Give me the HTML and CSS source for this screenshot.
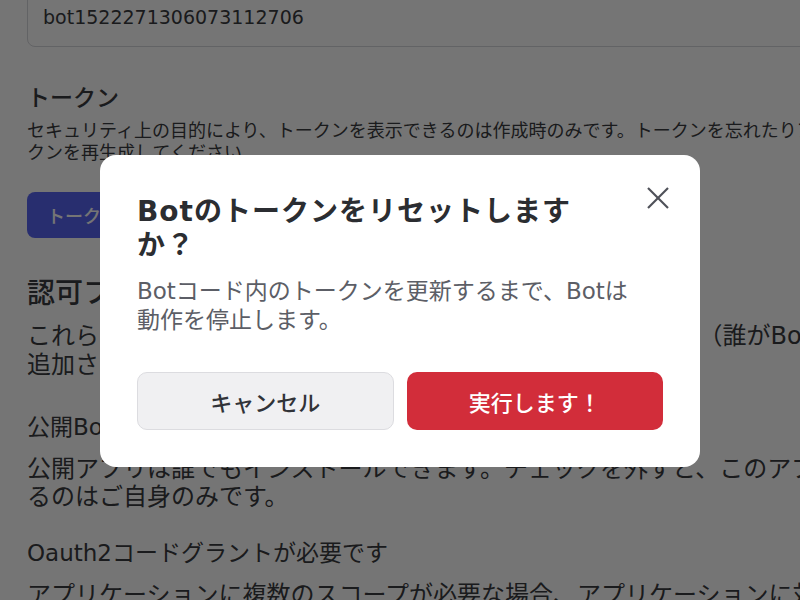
FILE: index.html
```html
<!DOCTYPE html>
<html lang="ja">
<head>
    <meta charset="UTF-8">
    <meta name="viewport" content="width=device-width, initial-scale=1.0">
    <title>Botのトークンをリセット</title>
    <link rel="stylesheet" href="styles.css">
</head>
<body>
    <main class="page">
        <div class="field">bot1522271306073112706</div>

        <h3 class="section-title">トークン</h3>
        <p class="section-note">セキュリティ上の目的により、トークンを表示できるのは作成時のみです。トークンを忘れたりアクセスできなくなった場合は、トー<br>クンを再生成してください。</p>
        <button class="btn btn--brand">トークンをリセット</button>

        <h2 class="group-title">認可フロー</h2>
        <p class="group-text">これらの設定では、アプリのインストール方法を制御できます（誰がBotを追加できるか）。<br>追加されたアプリが利用できる機能も設定します。</p>

        <h4 class="option-title">公開Bot</h4>
        <p class="option-text">公開アプリは誰でもインストールできます。チェックを外すと、このアプリをインストールでき<br>るのはご自身のみです。</p>

        <h4 class="option-title option-title--spaced">Oauth2コードグラントが必要です</h4>
        <p class="option-text">アプリケーションに複数のスコープが必要な場合、アプリケーションに対して</p>
    </main>

    <div class="backdrop"></div>

    <div class="layer">
        <div class="modal" role="dialog">
            <button class="modal__close" aria-label="閉じる">
                <svg width="24" height="24" viewBox="0 0 24 24">
                    <line x1="2" y1="2" x2="22" y2="22" />
                    <line x1="22" y1="2" x2="2" y2="22" />
                </svg>
            </button>
            <h1 class="modal__title">Botのトークンをリセットしますか？</h1>
            <p class="modal__text">Botコード内のトークンを更新するまで、Botは動作を停止します。</p>
            <div class="modal__actions">
                <button class="btn btn--secondary">キャンセル</button>
                <button class="btn btn--danger">実行します！</button>
            </div>
        </div>
    </div>
</body>
</html>
```

FILE: styles.css
```css
*{
    margin: 0;
    padding: 0;
    box-sizing: border-box;
}
html, body{
    height: 100%;
    overflow: hidden;
}
body{
    background: #ffffff;
    color: #3a3b40;
    font-family: "DejaVu Sans", "Noto Sans CJK JP", sans-serif;
}

/* page behind the dialog */
.page{
    width: 1100px;
    padding-left: 27px;
    margin-top: -13px;
    white-space: nowrap;
}
.field{
    height: 60px;
    padding: 0 15px;
    line-height: 58px;
    font-size: 19px;
    border: 1px solid #d6d7dc;
    border-radius: 8px;
}
.section-title{
    margin-top: 37px;
    font-size: 23px;
    line-height: 28px;
    font-weight: 500;
}
.section-note{
    margin-top: 8px;
    font-size: 18px;
    line-height: 22px;
}
.group-title{
    margin-top: 39px;
    font-size: 28px;
    line-height: 34px;
    font-weight: 500;
}
.group-text{
    margin-top: 11px;
    font-size: 24px;
    line-height: 29px;
}
.option-title{
    margin-top: 33px;
    font-size: 23px;
    line-height: 28px;
    font-weight: 400;
}
.option-title--spaced{
    margin-top: 28px;
}
.option-text{
    margin-top: 14px;
    font-size: 24px;
    line-height: 28px;
}

/* buttons */
.btn{
    border: none;
    font-family: inherit;
    font-weight: 500;
    cursor: pointer;
}
.btn--brand{
    display: block;
    margin-top: 28px;
    height: 46px;
    padding: 0 20px;
    border-radius: 8px;
    background: #5865f2;
    color: #ffffff;
    font-size: 18px;
}
.btn--secondary,
.btn--danger{
    height: 58px;
    border-radius: 10px;
    font-size: 22px;
}
.btn--secondary{
    background: #f0f0f2;
    border: 1px solid #dcdce0;
    color: #313338;
}
.btn--danger{
    background: #d22d3a;
    color: #ffffff;
}

/* dialog */
.backdrop{
    position: fixed;
    inset: 0;
    background: rgba(0, 0, 0, 0.54);
}
.layer{
    position: fixed;
    inset: 0;
    display: flex;
    justify-content: center;
    align-items: flex-start;
    padding-top: 155px;
}
.modal{
    position: relative;
    width: 600px;
    padding: 40px 37px 37px;
    background: #ffffff;
    border-radius: 16px;
}
.modal__close{
    position: absolute;
    top: 31px;
    right: 30px;
    background: none;
    border: none;
    line-height: 0;
}
.modal__close line{
    stroke: #4e5058;
    stroke-width: 2.2;
}
.modal__title{
    max-width: 450px;
    font-size: 28px;
    line-height: 34px;
    font-weight: 700;
    letter-spacing: 1px;
    color: #2b2d31;
}
.modal__text{
    max-width: 505px;
    margin-top: 14px;
    font-size: 23px;
    line-height: 29px;
    color: #5c5e66;
}
.modal__actions{
    display: grid;
    grid-template-columns: 1fr 1fr;
    gap: 13px;
    margin-top: 37px;
}
```
